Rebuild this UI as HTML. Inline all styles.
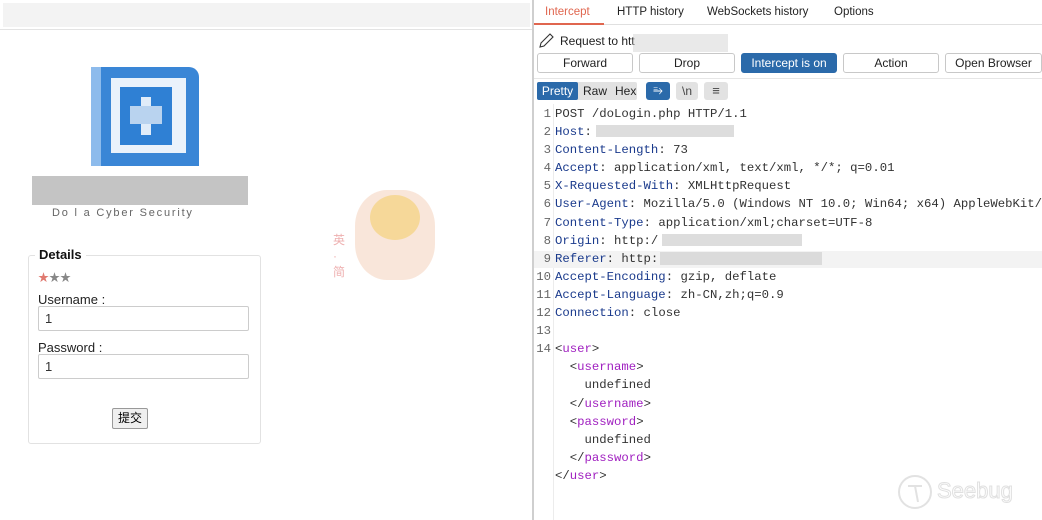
<!DOCTYPE html>
<html><head><meta charset="utf-8"><style>
*{margin:0;padding:0;box-sizing:border-box}
body{width:1042px;height:520px;background:#fff;position:relative;overflow:hidden;font-family:"Liberation Sans","Noto Sans CJK SC",sans-serif}
.abs{position:absolute}
.blur{position:absolute;background:#d4d4d4;opacity:.8}
.btn{position:absolute;top:53px;height:20px;border:1px solid #c8c8c8;border-radius:3px;background:#fff;font-size:12px;color:#222;text-align:center;line-height:18px}
.code{position:absolute;left:532px;top:105px;font-family:"Liberation Mono",monospace;font-size:12.3px;line-height:18.1px;color:#333;white-space:pre}
.ln{display:inline-block;width:19px;text-align:right;color:#666;margin-right:4px}
.k{color:#1a3a8c}
.t{color:#a020c0}
.lbl{font-size:13px;color:#222}
.inp{position:absolute;left:38px;width:211px;height:25px;border:1px solid #ccc;border-radius:2px;font-size:13px;padding-left:6px;line-height:23px;color:#333}
</style></head><body>
<div class="abs" style="left:3px;top:3px;width:527px;height:24px;background:#f3f3f3"></div>
<div class="abs" style="left:0;top:29px;width:532px;height:1px;background:#e3e3e3"></div>
<div class="abs" style="left:91px;top:67px;width:108px;height:99px;background:#3a86d6;border-radius:0 10px 0 0"></div>
<div class="abs" style="left:91px;top:67px;width:10px;height:99px;background:#8dbbec"></div>
<div class="abs" style="left:111px;top:78px;width:75px;height:75px;background:#eaf2fb"></div>
<div class="abs" style="left:120px;top:87px;width:52px;height:58px;background:#2f80d4"></div>
<div class="abs" style="left:141px;top:97px;width:10px;height:38px;background:#e0ecf9"></div>
<div class="abs" style="left:130px;top:106px;width:32px;height:18px;background:#b9d3ef"></div>
<div class="abs" style="left:32px;top:176px;width:216px;height:29px;background:#b0b0b0;opacity:.75"></div>
<div class="abs" style="left:52px;top:207px;font-size:11px;letter-spacing:1.8px;color:#666">Do l a Cyber Security</div>
<div class="abs" style="left:355px;top:190px;width:80px;height:90px;background:#f6dccb;border-radius:40%;opacity:.7"></div>
<div class="abs" style="left:370px;top:195px;width:50px;height:45px;background:#f5d488;border-radius:50%;opacity:.8"></div>
<div class="abs" style="left:333px;top:232px;font-size:12px;color:#eeb0b0;line-height:16px;width:12px">英<br>·<br>简</div>
<div class="abs" style="left:28px;top:255px;width:233px;height:189px;border:1px solid #e2e2e2;border-radius:3px"></div>
<div class="abs" style="left:35px;top:247px;background:#fff;padding:0 4px;font-size:13px;font-weight:bold;color:#111">Details</div>
<div class="abs" style="left:38px;top:269px;font-size:11px;color:#888"><span style="color:#e07a70">★</span>★★</div>
<div class="abs lbl" style="left:38px;top:292px">Username :</div>
<div class="inp" style="top:306px">1</div>
<div class="abs lbl" style="left:38px;top:340px">Password :</div>
<div class="inp" style="top:354px">1</div>
<div class="abs" style="left:112px;top:408px;width:36px;height:21px;border:1px solid #999;border-radius:2px;background:#efefef;font-size:12px;text-align:center;line-height:19px">提交</div>
<div class="abs" style="left:532px;top:0;width:2px;height:520px;background:#cfcfcf"></div>
<div class="abs" style="left:534px;top:0;width:508px;height:25px;border-bottom:1px solid #e0e0e0"></div>
<div class="abs" style="left:545px;top:6px;font-size:11.5px;color:#e0664f">Intercept</div>
<div class="abs" style="left:534px;top:23px;width:70px;height:2px;background:#e0664f"></div>
<div class="abs" style="left:617px;top:6px;font-size:11.5px;color:#222">HTTP history</div>
<div class="abs" style="left:707px;top:6px;font-size:11.5px;color:#222">WebSockets history</div>
<div class="abs" style="left:834px;top:6px;font-size:11.5px;color:#222">Options</div>
<svg class="abs" style="left:538px;top:33px" width="16" height="16" viewBox="0 0 16 16"><path d="M2 14 L3 10 L12 1 L15 4 L6 13 Z M2 14 L6 13" fill="none" stroke="#333" stroke-width="1.1"/></svg>
<div class="abs" style="left:560px;top:34px;font-size:12px;color:#222">Request to htt</div>
<div class="blur" style="left:633px;top:34px;width:95px;height:18px;opacity:.5"></div>
<div class="btn" style="left:537px;width:96px">Forward</div>
<div class="btn" style="left:639px;width:96px">Drop</div>
<div class="btn" style="left:741px;width:96px;background:#2b6aaa;border-color:#2b6aaa;color:#fff">Intercept is on</div>
<div class="btn" style="left:843px;width:96px">Action</div>
<div class="btn" style="left:945px;width:97px">Open Browser</div>
<div class="abs" style="left:534px;top:78px;width:508px;height:1px;background:#e6e6e6"></div>
<div class="abs" style="left:537px;top:82px;width:100px;height:18px;background:#e2e2e2;border-radius:2px"></div>
<div class="abs" style="left:537px;top:82px;width:41px;height:18px;background:#2b6aaa;border-radius:2px;color:#fff;font-size:12px;text-align:center;line-height:18px">Pretty</div>
<div class="abs" style="left:583px;top:84px;font-size:12px;color:#222">Raw</div>
<div class="abs" style="left:615px;top:84px;font-size:12px;color:#222">Hex</div>
<div class="abs" style="left:646px;top:82px;width:24px;height:18px;background:#2b6aaa;border-radius:3px;color:#fff;font-size:12px;text-align:center;line-height:17px">⥱</div>
<div class="abs" style="left:676px;top:82px;width:22px;height:18px;background:#e2e2e2;border-radius:3px;font-size:12px;text-align:center;line-height:18px;color:#444">\n</div>
<div class="abs" style="left:704px;top:82px;width:24px;height:18px;background:#e2e2e2;border-radius:3px;font-size:13px;text-align:center;line-height:17px;color:#444">≡</div>
<div class="abs" style="left:553px;top:104px;width:1px;height:416px;background:#ececec"></div>
<div class="abs" style="left:534px;top:251px;width:508px;height:17px;background:#f3f3f3"></div>
<div class="code"><span class="ln">1</span>POST /doLogin.php HTTP/1.1
<span class="ln">2</span><span class="k">Host</span>:
<span class="ln">3</span><span class="k">Content-Length</span>: 73
<span class="ln">4</span><span class="k">Accept</span>: application/xml, text/xml, */*; q=0.01
<span class="ln">5</span><span class="k">X-Requested-With</span>: XMLHttpRequest
<span class="ln">6</span><span class="k">User-Agent</span>: Mozilla/5.0 (Windows NT 10.0; Win64; x64) AppleWebKit/
<span class="ln">7</span><span class="k">Content-Type</span>: application/xml;charset=UTF-8
<span class="ln">8</span><span class="k">Origin</span>: http:/
<span class="ln">9</span><span class="k">Referer</span>: http:
<span class="ln">10</span><span class="k">Accept-Encoding</span>: gzip, deflate
<span class="ln">11</span><span class="k">Accept-Language</span>: zh-CN,zh;q=0.9
<span class="ln">12</span><span class="k">Connection</span>: close
<span class="ln">13</span>
<span class="ln">14</span>&lt;<span class="t">user</span>&gt;
<span class="ln"></span>  &lt;<span class="t">username</span>&gt;
<span class="ln"></span>    undefined
<span class="ln"></span>  &lt;/<span class="t">username</span>&gt;
<span class="ln"></span>  &lt;<span class="t">password</span>&gt;
<span class="ln"></span>    undefined
<span class="ln"></span>  &lt;/<span class="t">password</span>&gt;
<span class="ln"></span>&lt;/<span class="t">user</span>&gt;</div>
<div class="blur" style="left:596px;top:125px;width:138px;height:12px"></div>
<div class="blur" style="left:662px;top:234px;width:140px;height:12px"></div>
<div class="blur" style="left:660px;top:252px;width:162px;height:13px"></div>
<svg class="abs" style="left:896px;top:472px" width="40" height="40" viewBox="0 0 40 40"><circle cx="19" cy="20" r="16" fill="none" stroke="#e2e2e2" stroke-width="2"/><path d="M12 14 L26 14 M19 14 L22 30" stroke="#e2e2e2" stroke-width="2" fill="none"/></svg>
<div class="abs" style="left:937px;top:478px;font-size:22px;color:#fff;-webkit-text-stroke:1px #e0e0e0">Seebug</div>
</body></html>
